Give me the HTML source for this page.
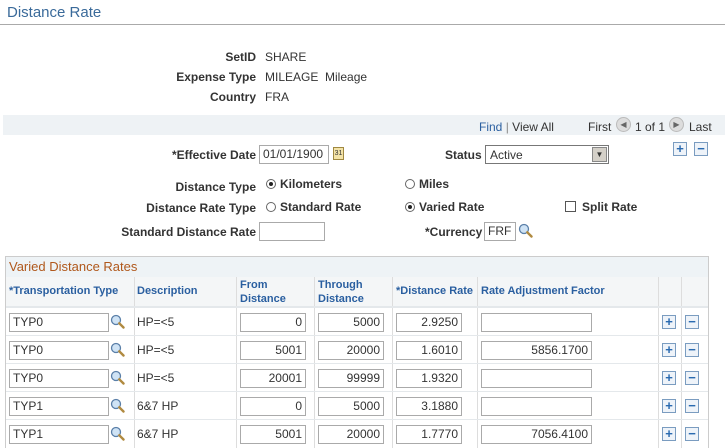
<!DOCTYPE html>
<html><head><meta charset="utf-8"><style>
*{margin:0;padding:0;box-sizing:border-box}
body{width:725px;height:448px;overflow:hidden;background:#fff;font-family:"Liberation Sans",Arial,sans-serif;font-size:12px;color:#333;position:relative}
.a{position:absolute;white-space:nowrap}
.lbl{font-weight:bold;color:#333;text-align:right}
.inp{position:absolute;height:19px;border:1px solid #aaa;background:#fff;padding:1px 3px;font-size:12px;line-height:15px;color:#333}
.r{text-align:right}
.hd{color:#2a5fa0;font-weight:bold;font-size:11px}
.vl{position:absolute;top:277px;width:1px;height:171px;background:#ddd}
.hl{position:absolute;left:6px;width:702px;height:2px;background:#e4e8eb}
.pb{position:absolute;width:14px;height:14px;border:1px solid #7a9cc0;background:#eef3f9;color:#2a6ab0;font-weight:bold;font-size:13px;line-height:11px;text-align:center}
.rad{display:inline-block;width:10px;height:10px;border:1px solid #666;border-radius:50%;vertical-align:-1px;margin-right:4px;position:relative;background:#fff}
.rad.on::after{content:"";position:absolute;left:2px;top:2px;width:4px;height:4px;border-radius:50%;background:#222}
</style></head><body>
<svg width="0" height="0" style="position:absolute"><defs><symbol id="lens" viewBox="0 0 15 15"><circle cx="6" cy="6" r="4.5" fill="#cfe3f5" stroke="#5a7fa8" stroke-width="1.3"/><path d="M9.3 9.3 L13.5 13.5" stroke="#b08a40" stroke-width="2.4" stroke-linecap="round"/></symbol></defs></svg>
<div class="a" style="left:7px;top:4px;font-size:15px;color:#3a6a9a">Distance Rate</div>
<div class="a" style="left:0;top:24px;width:725px;height:1px;background:#aaa"></div>

<div class="a lbl" style="right:469px;top:50px">SetID</div><div class="a" style="left:265px;top:50px">SHARE</div>
<div class="a lbl" style="right:469px;top:70px">Expense Type</div><div class="a" style="left:265px;top:70px">MILEAGE&nbsp; Mileage</div>
<div class="a lbl" style="right:469px;top:90px">Country</div><div class="a" style="left:265px;top:90px">FRA</div>

<div class="a" style="left:3px;top:115px;width:722px;height:20px;background:#eef2f5"></div>
<div class="a" style="left:479px;top:120px;color:#2a5fa0">Find <span style="color:#888">|</span> <span style="color:#333">View All</span></div>
<div class="a" style="left:588px;top:120px">First</div>
<div class="a" style="left:616px;top:117px;width:15px;height:15px;border-radius:50%;background:#ddd;border:1px solid #bbb;font-size:8px;color:#666;text-align:center;line-height:13px">◀</div>
<div class="a" style="left:635px;top:120px">1 of 1</div>
<div class="a" style="left:669px;top:117px;width:15px;height:15px;border-radius:50%;background:#ddd;border:1px solid #bbb;font-size:8px;color:#666;text-align:center;line-height:13px">▶</div>
<div class="a" style="left:689px;top:120px">Last</div>

<div class="a lbl" style="right:469px;top:148px">*Effective Date</div>
<div class="inp" style="left:259px;top:145px;width:70px">01/01/1900</div>
<div class="a" style="left:333px;top:147px;width:11px;height:13px;background:#f3e3a8;border:1px solid #a08840;font-size:7px;text-align:center;line-height:12px">31</div>
<div class="a lbl" style="left:445px;top:148px">Status</div>
<div class="a" style="left:485px;top:145px;width:124px;height:19px;border:1px solid #777;background:#fff;padding:2px 4px">Active<span style="position:absolute;right:1px;top:1px;width:15px;height:15px;background:#d4d0c8;border:1px solid #888;font-size:8px;text-align:center;line-height:14px">▼</span></div>
<div class="pb" style="left:673px;top:142px">+</div><div class="pb" style="left:694px;top:142px">−</div>

<div class="a lbl" style="right:469px;top:180px">Distance Type</div>
<div class="a" style="left:266px;top:177px"><span class="rad on"></span><b>Kilometers</b></div>
<div class="a" style="left:405px;top:177px"><span class="rad"></span><b>Miles</b></div>
<div class="a lbl" style="right:469px;top:201px">Distance Rate Type</div>
<div class="a" style="left:266px;top:200px"><span class="rad"></span><b>Standard Rate</b></div>
<div class="a" style="left:405px;top:200px"><span class="rad on"></span><b>Varied Rate</b></div>
<div class="a" style="left:565px;top:201px;width:11px;height:11px;border:1px solid #555"></div>
<div class="a" style="left:582px;top:200px;font-weight:bold">Split Rate</div>
<div class="a lbl" style="right:469px;top:225px">Standard Distance Rate</div>
<div class="inp" style="left:259px;top:222px;width:66px"></div>
<div class="a lbl" style="left:425px;top:225px">*Currency</div>
<div class="inp" style="left:484px;top:222px;width:32px">FRF</div>
<svg class="a" style="left:518px;top:223px" width="15" height="15"><use href="#lens"/></svg>

<div class="a" style="left:5px;top:256px;width:704px;height:192px;border:1px solid #ccc;border-bottom:none"></div>
<div class="a" style="left:6px;top:257px;width:702px;height:20px;background:#eef3f6"></div>
<div class="a" style="left:9px;top:259px;color:#b0581c;font-size:13px">Varied Distance Rates</div>
<div class="a" style="left:6px;top:277px;width:702px;height:30px;background:#f4f6f7"></div>
<div class="vl" style="left:134px"></div><div class="vl" style="left:236px"></div><div class="vl" style="left:314px"></div><div class="vl" style="left:392px"></div><div class="vl" style="left:477px"></div><div class="vl" style="left:658px"></div><div class="vl" style="left:681px"></div>
<div class="a hd" style="left:9px;top:285px">*Transportation Type</div>
<div class="a hd" style="left:137px;top:285px">Description</div>
<div class="a hd" style="left:240px;top:278px;line-height:14px">From<br>Distance</div>
<div class="a hd" style="left:318px;top:278px;line-height:14px">Through<br>Distance</div>
<div class="a hd" style="left:396px;top:285px">*Distance Rate</div>
<div class="a hd" style="left:481px;top:285px">Rate Adjustment Factor</div>
<div class="hl" style="top:306px"></div>
<div class="hl" style="top:335px;height:1px"></div><div class="hl" style="top:363px;height:1px"></div><div class="hl" style="top:391px;height:1px"></div><div class="hl" style="top:419px;height:1px"></div>

<div class="inp" style="left:9px;top:313px;width:100px">TYP0</div><svg class="a" style="left:110px;top:314px" width="15" height="15"><use href="#lens"/></svg><div class="a" style="left:137px;top:315px">HP=&lt;5</div>
<div class="inp r" style="left:240px;top:313px;width:66px">0</div><div class="inp r" style="left:318px;top:313px;width:66px">5000</div><div class="inp r" style="left:396px;top:313px;width:66px">2.9250</div><div class="inp r" style="left:481px;top:313px;width:111px"></div>
<div class="pb" style="left:662px;top:315px">+</div><div class="pb" style="left:685px;top:315px">−</div>

<div class="inp" style="left:9px;top:341px;width:100px">TYP0</div><svg class="a" style="left:110px;top:342px" width="15" height="15"><use href="#lens"/></svg><div class="a" style="left:137px;top:343px">HP=&lt;5</div>
<div class="inp r" style="left:240px;top:341px;width:66px">5001</div><div class="inp r" style="left:318px;top:341px;width:66px">20000</div><div class="inp r" style="left:396px;top:341px;width:66px">1.6010</div><div class="inp r" style="left:481px;top:341px;width:111px">5856.1700</div>
<div class="pb" style="left:662px;top:343px">+</div><div class="pb" style="left:685px;top:343px">−</div>

<div class="inp" style="left:9px;top:369px;width:100px">TYP0</div><svg class="a" style="left:110px;top:370px" width="15" height="15"><use href="#lens"/></svg><div class="a" style="left:137px;top:371px">HP=&lt;5</div>
<div class="inp r" style="left:240px;top:369px;width:66px">20001</div><div class="inp r" style="left:318px;top:369px;width:66px">99999</div><div class="inp r" style="left:396px;top:369px;width:66px">1.9320</div><div class="inp r" style="left:481px;top:369px;width:111px"></div>
<div class="pb" style="left:662px;top:371px">+</div><div class="pb" style="left:685px;top:371px">−</div>

<div class="inp" style="left:9px;top:397px;width:100px">TYP1</div><svg class="a" style="left:110px;top:398px" width="15" height="15"><use href="#lens"/></svg><div class="a" style="left:137px;top:399px">6&amp;7 HP</div>
<div class="inp r" style="left:240px;top:397px;width:66px">0</div><div class="inp r" style="left:318px;top:397px;width:66px">5000</div><div class="inp r" style="left:396px;top:397px;width:66px">3.1880</div><div class="inp r" style="left:481px;top:397px;width:111px"></div>
<div class="pb" style="left:662px;top:399px">+</div><div class="pb" style="left:685px;top:399px">−</div>

<div class="inp" style="left:9px;top:425px;width:100px">TYP1</div><svg class="a" style="left:110px;top:426px" width="15" height="15"><use href="#lens"/></svg><div class="a" style="left:137px;top:427px">6&amp;7 HP</div>
<div class="inp r" style="left:240px;top:425px;width:66px">5001</div><div class="inp r" style="left:318px;top:425px;width:66px">20000</div><div class="inp r" style="left:396px;top:425px;width:66px">1.7770</div><div class="inp r" style="left:481px;top:425px;width:111px">7056.4100</div>
<div class="pb" style="left:662px;top:427px">+</div><div class="pb" style="left:685px;top:427px">−</div>
</body></html>
